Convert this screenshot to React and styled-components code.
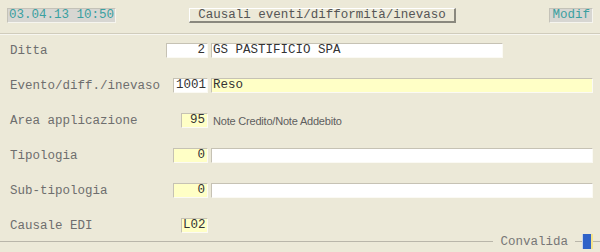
import styled, { createGlobalStyle } from "styled-components";

const GlobalStyle = createGlobalStyle`
  html, body {
    margin: 0;
    padding: 0;
    background: #ece9d8;
  }
  body {
    font-family: "Liberation Mono", "DejaVu Sans Mono", monospace;
  }
`;

const Screen = styled.div`
  width: 600px;
  height: 252px;
  background: #ece9d8;
  overflow: hidden;
  display: flex;
  flex-direction: column;
`;

const Header = styled.div`
  height: 33px;
  display: flex;
  align-items: flex-start;
  padding: 8px 7px 0 7px;
  box-sizing: border-box;
`;

const Stamp = styled.div`
  height: 15px;
  box-sizing: border-box;
  padding: 0 ${(p) => p.$pad || 1}px;
  background: #d7d6d2;
  border-top: 1px solid #c4c2b8;
  border-left: 1px solid #c4c2b8;
  border-bottom: 1px solid #f6f5ef;
  border-right: 1px solid #f6f5ef;
  color: #3aa0a0;
  font-size: 12.5px;
  line-height: 13px;
  white-space: nowrap;
`;

const TitleButton = styled.div`
  margin-left: 73px;
  width: 267px;
  height: 15px;
  box-sizing: border-box;
  background: #ece9d8;
  border-top: 1px solid #ffffff;
  border-left: 1px solid #ffffff;
  border-bottom: 2px solid #8a887e;
  border-right: 2px solid #8a887e;
  color: #555555;
  font-size: 12.5px;
  line-height: 12px;
  text-align: center;
  white-space: nowrap;
`;

const Spacer = styled.div`
  flex: 1;
`;

const Separator = styled.div`
  height: 0;
  border-top: 1px solid #d0ccbc;
  border-bottom: 1px solid #f7f6f0;
`;

const Form = styled.div`
  display: flex;
  flex-direction: column;
  gap: 20px;
  padding-top: 8px;
`;

const Row = styled.div`
  display: grid;
  grid-template-columns: 198px 1fr;
  column-gap: 3px;
  padding-left: 10px;
  height: 15px;
  align-items: center;
`;

const LabelCell = styled.div`
  display: flex;
  align-items: center;
  justify-content: space-between;
  height: 15px;
`;

const Label = styled.span`
  color: #6e6e6e;
  font-size: 12.5px;
  white-space: nowrap;
`;

const Field = styled.div`
  height: 15px;
  box-sizing: border-box;
  width: ${(p) => (p.$w ? `${p.$w}px` : "auto")};
  background: ${(p) => (p.$yellow ? "#ffffc6" : "#ffffff")};
  border-top: 1px solid #c6c2b4;
  border-left: 1px solid #c6c2b4;
  border-bottom: 1px solid #fbfaf4;
  border-right: 1px solid #fbfaf4;
  color: #333333;
  font-size: 12.5px;
  line-height: 13px;
  padding: 0 ${(p) => (p.$right ? 2 : 1)}px;
  text-align: ${(p) => (p.$right ? "right" : "left")};
  white-space: nowrap;
  overflow: hidden;
`;

const Desc = styled.span`
  font-family: "Liberation Sans", Arial, sans-serif;
  font-size: 11px;
  color: #5e5e5e;
  padding-left: 2px;
  letter-spacing: -0.2px;
`;

const Footer = styled.div`
  margin-top: 1px;
  height: 15px;
  display: flex;
  align-items: center;
`;

const Line = styled.div`
  height: 1px;
  background: #b9b6aa;
  flex: ${(p) => (p.$grow ? "1 1 auto" : "0 0 auto")};
  width: ${(p) => (p.$w ? `${p.$w}px` : "auto")};
`;

const Legend = styled.span`
  color: #777777;
  font-size: 12.5px;
  padding: 0 7px;
  white-space: nowrap;
  flex-shrink: 0;
`;

const Check = styled.span`
  flex: 0 0 11px;
  width: 11px;
  height: 15px;
  box-sizing: border-box;
  background: #2f62c8;
  border-left: 1px solid #c8d4ea;
  border-right: 2px solid #f4e48a;
`;

const rows = [
  { label: "Ditta", code: "2", w: 42, name: "GS PASTIFICIO SPA", nameW: 292 },
  { label: "Evento/diff./inevaso", code: "1001", w: 35, name: "Reso", yellowName: true },
  { label: "Area applicazione", code: "95", w: 27, yellow: true, desc: "Note Credito/Note Addebito" },
  { label: "Tipologia", code: "0", w: 35, yellow: true, name: "" },
  { label: "Sub-tipologia", code: "0", w: 35, yellow: true, name: "" },
  { label: "Causale EDI", code: "L02", w: 27, yellow: true, left: true },
];

function App() {
  return (
    <Screen>
      <GlobalStyle />
      <Header>
        <Stamp>03.04.13 10:50</Stamp>
        <TitleButton>Causali eventi/difformità/inevaso</TitleButton>
        <Spacer />
        <Stamp $pad={2}>Modif</Stamp>
      </Header>
      <Separator />
      <Form>
        {rows.map((r) => (
          <Row key={r.label}>
            <LabelCell>
              <Label>{r.label}</Label>
              <Field $w={r.w} $yellow={r.yellow} $right={!r.left}>
                {r.code}
              </Field>
            </LabelCell>
            {r.desc !== undefined && <Desc>{r.desc}</Desc>}
            {r.name !== undefined && (
              <Field
                $w={r.nameW}
                $yellow={r.yellowName}
                style={{ marginRight: r.nameW ? 0 : 7 }}
              >
                {r.name}
              </Field>
            )}
          </Row>
        ))}
      </Form>
      <Footer>
        <Line $grow />
        <Legend>Convalida</Legend>
        <Line $w={7} />
        <Check />
        <Line $w={7} />
      </Footer>
    </Screen>
  );
}

export default App;
